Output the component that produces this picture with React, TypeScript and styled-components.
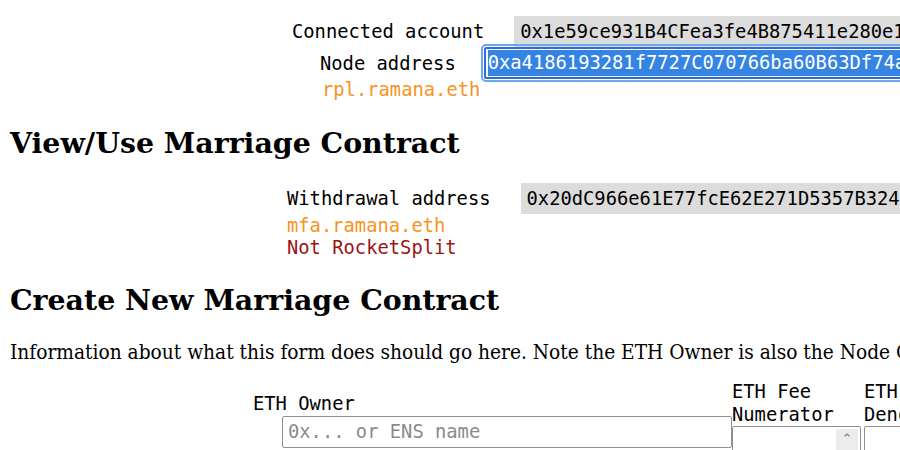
import React from 'react';
import styled, { createGlobalStyle } from 'styled-components';

const GlobalStyle = createGlobalStyle`
  html, body {
    margin: 0;
    padding: 0;
    background: #fff;
    overflow: hidden;
  }
  body {
    font-family: 'DejaVu Serif', serif;
    font-size: 19.2px;
    color: #000;
  }
`;

// 전체 페이지
const Page = styled.div`
  width: 1400px;
  padding: 15px 10px 0 10px;
`;

// 라벨 + 값 한 줄
const Row = styled.div<{ $left: number }>`
  display: flex;
  align-items: center;
  padding-left: ${(p) => p.$left}px;
  gap: 30px;
  height: 32px;
`;

const Label = styled.span`
  font-family: 'DejaVu Sans Mono', monospace;
  font-size: 18.8px;
  white-space: nowrap;
`;

// 회색 값 상자
const ValueBox = styled.span`
  font-family: 'DejaVu Sans Mono', monospace;
  font-size: 18.8px;
  background: #dcdcdc;
  height: 31px;
  line-height: 31px;
  padding: 0 6px;
  white-space: nowrap;
`;

// 포커스된 입력칸 (선택된 텍스트)
const FocusedInput = styled.div`
  font-family: 'DejaVu Sans Mono', monospace;
  font-size: 18.8px;
  height: 26px;
  line-height: 26px;
  padding: 1px 2px;
  margin-left: -2px;
  border: 2px solid #2b6fd6;
  border-radius: 2px;
  outline: 2px solid #6aa6f2;
  outline-offset: 1px;
  white-space: nowrap;
`;

const Selected = styled.span`
  background: #3584e4;
  color: #fff;
  display: inline-block;
  height: 26px;
`;

const Note = styled.div<{ $color: string; $left: number }>`
  font-family: 'DejaVu Sans Mono', monospace;
  font-size: 18.8px;
  color: ${(p) => p.$color};
  padding-left: ${(p) => p.$left}px;
  line-height: 22px;
`;

const Heading = styled.h2`
  font-family: 'DejaVu Serif', serif;
  font-size: 28.4px;
  font-weight: bold;
  margin: 0;
  line-height: 34px;
`;

const Paragraph = styled.p`
  font-family: 'DejaVu Serif', serif;
  font-stretch: condensed;
  font-size: 20.7px;
  margin: 0;
  white-space: nowrap;
`;

// 생성 폼
const Form = styled.div`
  display: flex;
  align-items: flex-start;
  padding-left: 243px;
`;

const Field = styled.div<{ $top?: number }>`
  display: flex;
  flex-direction: column;
  margin-top: ${(p) => p.$top ?? 0}px;
`;

const FieldLabel = styled.label`
  font-family: 'DejaVu Sans Mono', monospace;
  font-size: 18.8px;
  line-height: 23px;
`;

const TextInput = styled.div`
  font-family: 'DejaVu Sans Mono', monospace;
  font-size: 18.8px;
  color: #8a8a8a;
  width: 438px;
  height: 30px;
  line-height: 30px;
  padding: 0 5px;
  border: 1px solid #8f8f8f;
  border-radius: 2px;
  margin: 1px 0 0 29px;
`;

const NumberInput = styled.div`
  width: 127px;
  height: 30px;
  border: 1px solid #8f8f8f;
  border-radius: 2px;
  position: relative;
`;

const Spinner = styled.div`
  position: absolute;
  right: 2px;
  top: 2px;
  width: 22px;
  height: 28px;
  background: #ececec;
  color: #777;
  font-family: 'DejaVu Sans', sans-serif;
  font-size: 13px;
  text-align: center;
  line-height: 12px;
  padding-top: 4px;
  box-sizing: border-box;
`;

export default function App() {
  return (
    <>
      <GlobalStyle />
      <Page>
        <Row $left={282}>
          <Label>Connected account</Label>
          <ValueBox>0x1e59ce931B4CFea3fe4B875411e280e173cB7A9C</ValueBox>
        </Row>
        <Row $left={310}>
          <Label>Node address</Label>
          <FocusedInput>
            <Selected>0xa4186193281f7727C070766ba60B63Df74aa</Selected>
          </FocusedInput>
        </Row>
        <Note $color="#f7931e" $left={312}>rpl.ramana.eth</Note>

        <Heading style={{ marginTop: 25 }}>View/Use Marriage Contract</Heading>

        <Row $left={277} style={{ marginTop: 22 }}>
          <Label>Withdrawal address</Label>
          <ValueBox>0x20dC966e61E77fcE62E271D5357B32476bC4f</ValueBox>
        </Row>
        <Note $color="#f7931e" $left={277} style={{ marginTop: 1 }}>mfa.ramana.eth</Note>
        <Note $color="#9a1414" $left={277}>Not RocketSplit</Note>

        <Heading style={{ marginTop: 24 }}>Create New Marriage Contract</Heading>

        <Paragraph style={{ marginTop: 23 }}>
          Information about what this form does should go here. Note the ETH Owner is also the Node
          Operator.
        </Paragraph>

        <Form style={{ marginTop: 16 }}>
          <Field $top={12}>
            <FieldLabel>ETH Owner</FieldLabel>
            <TextInput>0x... or ENS name</TextInput>
          </Field>
          <Field>
            <FieldLabel>ETH Fee<br />Numerator</FieldLabel>
            <NumberInput>
              <Spinner>⌃<br />⌄</Spinner>
            </NumberInput>
          </Field>
          <Field style={{ marginLeft: 3 }}>
            <FieldLabel>ETH Fee<br />Denominator</FieldLabel>
            <NumberInput />
          </Field>
        </Form>
      </Page>
    </>
  );
}
